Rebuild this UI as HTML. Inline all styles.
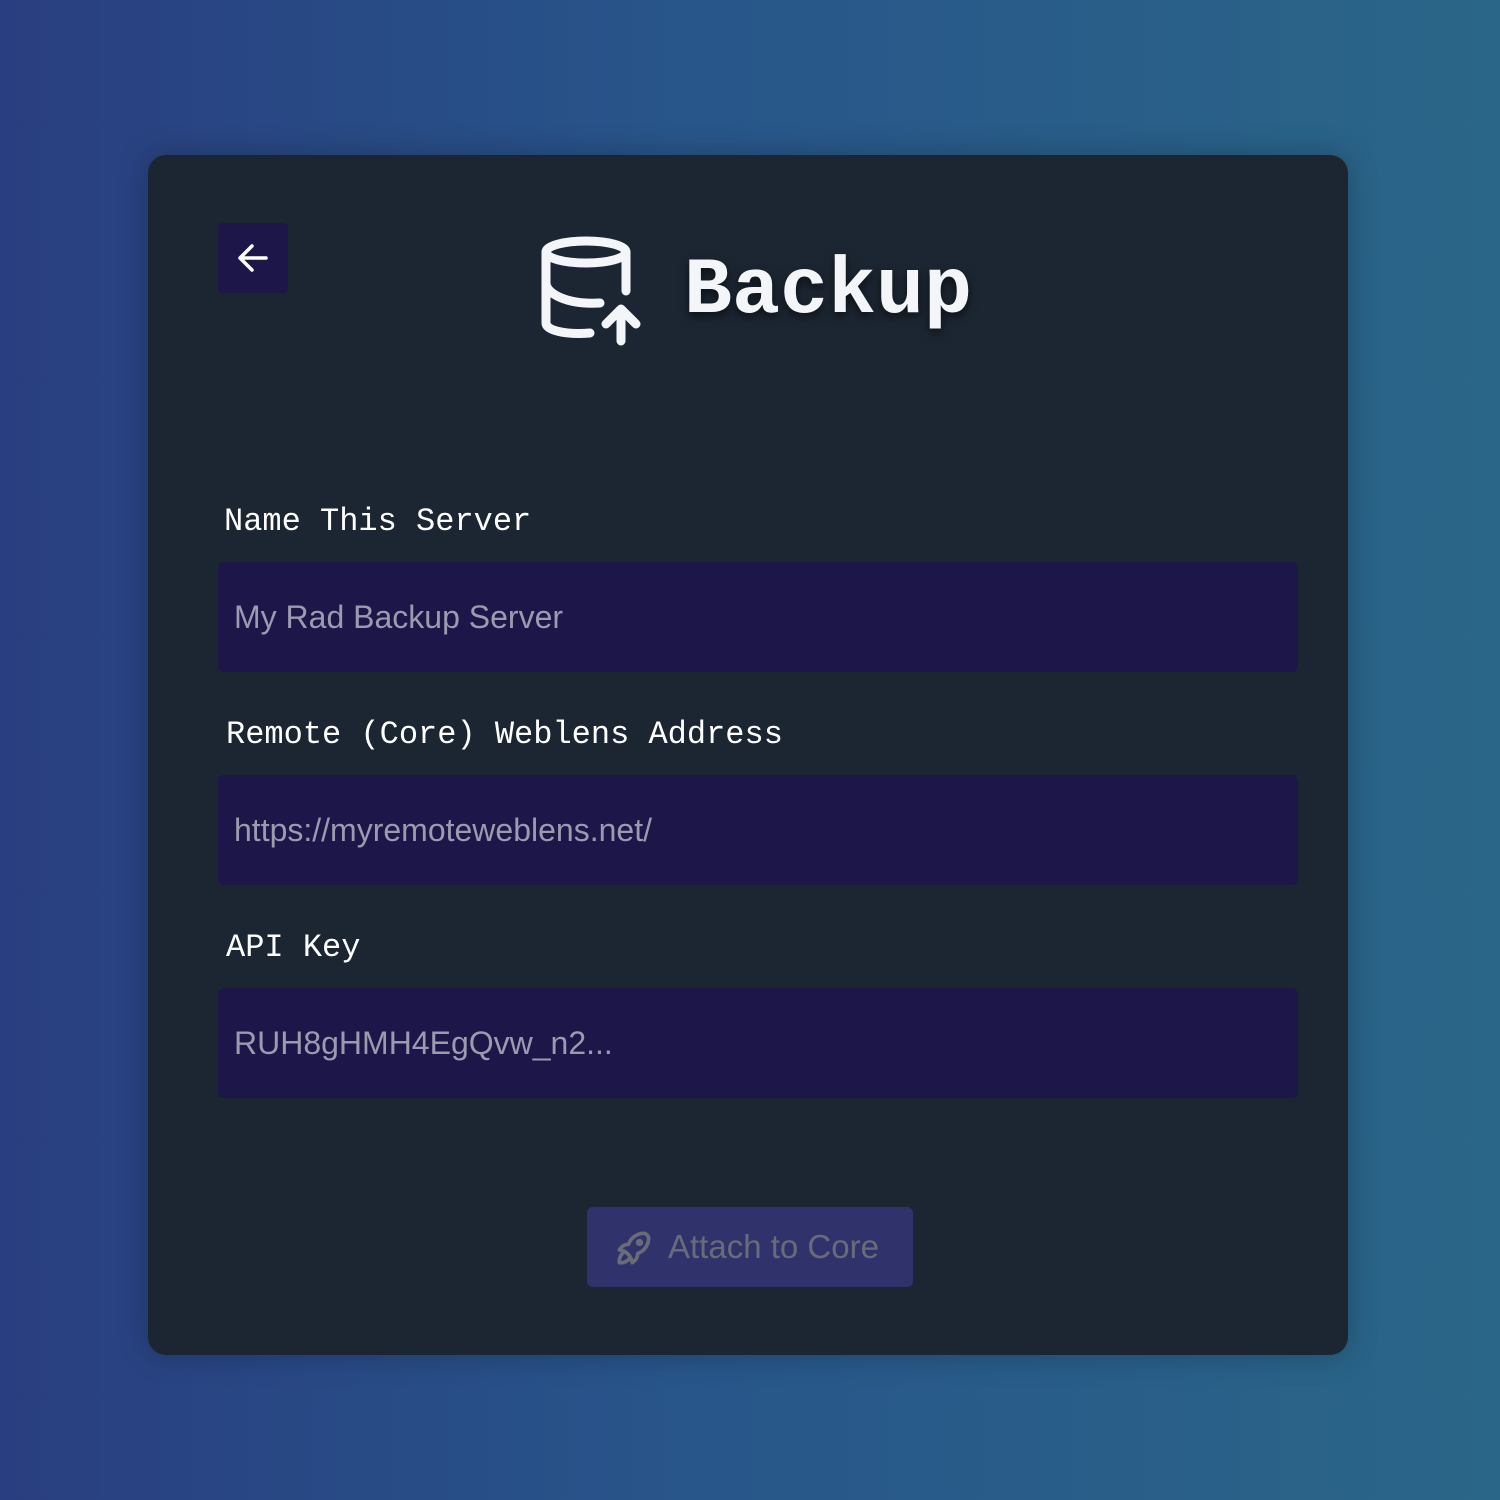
<!DOCTYPE html>
<html><head><style>
body{margin:0;width:1500px;height:1500px;background:linear-gradient(90deg,#293e80 0%,#28558a 45%,#2a6688 100%);font-family:"Liberation Sans",sans-serif;position:relative;overflow:hidden}
.card{position:absolute;left:148px;top:155px;width:1200px;height:1200px;background:#1c2632;border-radius:18px;box-shadow:0 0 30px rgba(0,0,0,.25)}
.back{position:absolute;left:218px;top:223px;width:70px;height:70px;background:#1c1649;border-radius:5px}
.title{position:absolute;left:684px;top:242px;font-family:"Liberation Mono",monospace;font-weight:bold;font-size:80px;color:#f4f5f8;text-shadow:0 4px 10px rgba(0,0,0,.6);line-height:100px}
.lbl{position:absolute;font-family:"Liberation Mono",monospace;font-size:32px;color:#fff;line-height:40px}
.inp{position:absolute;left:218px;width:1080px;height:110px;background:#1c1649;border-radius:6px;color:#9c9aaf;font-size:32px;line-height:110px;padding-left:16px;box-sizing:border-box}
.btn{position:absolute;left:587px;top:1207px;width:326px;height:80px;background:#30326b;border-radius:6px;color:#6a6b78;font-size:33px;line-height:80px}
</style></head><body>
<div class="card"></div>
<div class="back"><svg width="70" height="70" viewBox="0 0 70 70"><path d="M48 35H22M34 23L22 35L34 47" stroke="#fff" stroke-width="3.5" fill="none" stroke-linecap="round" stroke-linejoin="round"/></svg></div>
<svg style="position:absolute;left:520px;top:223px" width="140" height="130" viewBox="0 0 140 130" fill="none" stroke="#f4f5f8" stroke-width="9" stroke-linecap="round" stroke-linejoin="round">
<ellipse cx="66" cy="29" rx="40" ry="11"/>
<path d="M106 29V68"/>
<path d="M26 29V100C26 107 44 112 70 110"/>
<path d="M26 60C26 70 46 82 80 80"/>
<path d="M101 118V86M86 101L101 86L116 101"/>
</svg>
<div class="title">Backup</div>
<div class="lbl" style="left:224px;top:502px">Name This Server</div>
<div class="inp" style="top:562px">My Rad Backup Server</div>
<div class="lbl" style="left:226px;top:715px">Remote (Core) Weblens Address</div>
<div class="inp" style="top:775px">https://myremoteweblens.net/</div>
<div class="lbl" style="left:226px;top:928px">API Key</div>
<div class="inp" style="top:988px">RUH8gHMH4EgQvw_n2...</div>
<div class="btn">
<svg style="position:absolute;left:25px;top:19px" width="44" height="44" viewBox="0 0 24 24" fill="none" stroke="#6a6b78" stroke-width="2" stroke-linecap="round" stroke-linejoin="round"><path d="M4 13a8 8 0 0 1 7 7a6 6 0 0 0 3-5a9 9 0 0 0 6-8a3 3 0 0 0-3-3a9 9 0 0 0-8 6a6 6 0 0 0-5 3"/><path d="M7 14a6 6 0 0 0-3 6a6 6 0 0 0 6-3"/><circle cx="15" cy="9" r="1"/></svg>
<span style="position:absolute;left:81px">Attach to Core</span></div>
</body></html>
